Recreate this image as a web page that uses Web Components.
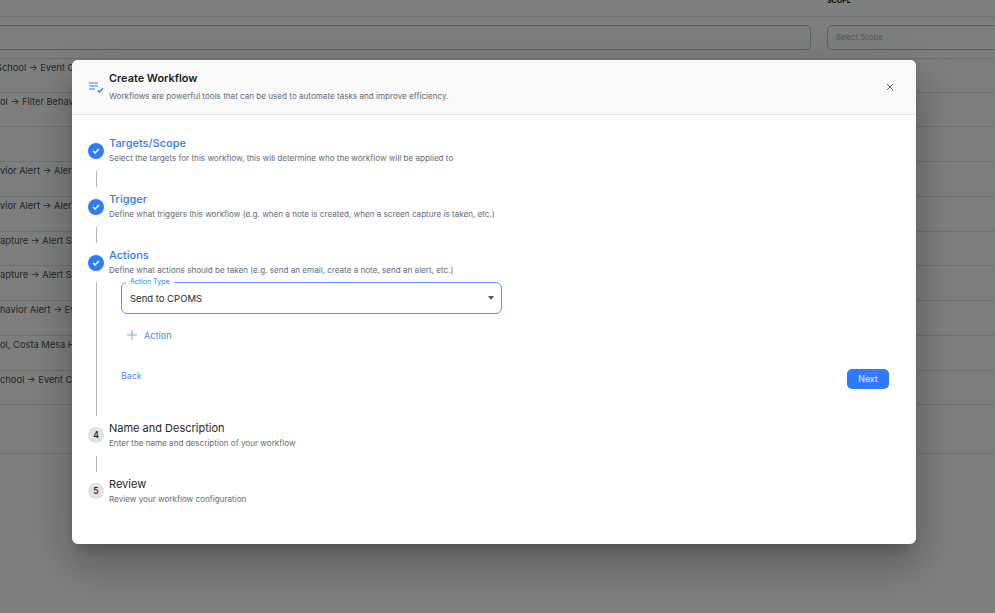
<!DOCTYPE html>
<html lang="en"><head><meta charset="utf-8"><title>Create Workflow</title>
<style>
html,body{margin:0;height:100%;overflow:hidden;background:#fff;font-family:Inter,"Noto Sans",sans-serif}
</style></head><body>
<bg-table></bg-table>
<workflow-modal>
  <wf-step state="done" title-text="Targets/Scope" desc="Select the targets for this workflow, this will determine who the workflow will be applied to"></wf-step>
  <wf-step state="done" title-text="Trigger" desc="Define what triggers this workflow (e.g. when a note is created, when a screen capture is taken, etc.)"></wf-step>
  <wf-step state="done" expanded title-text="Actions" desc="Define what actions should be taken (e.g. send an email, create a note, send an alert, etc.)">
    <action-form></action-form>
  </wf-step>
  <wf-step num="4" title-text="Name and Description" desc="Enter the name and description of your workflow"></wf-step>
  <wf-step num="5" last title-text="Review" desc="Review your workflow configuration"></wf-step>
</workflow-modal>
<script>
class BgTable extends HTMLElement{
  constructor(){super();const s=this.attachShadow({mode:'open'});
  const data=[
    [34,'School → Event Created',-4],
    [34,'ol → Filter Behavior',0],
    [35,'',0],
    [35,'vior Alert → Alert Sent',0],
    [35,'vior Alert → Alert Sent',0],
    [34,'apture → Alert Sent',0],
    [35,'apture → Alert Sent',0],
    [35,'havior Alert → Event',0],
    [35,'ol, Costa Mesa High',0],
    [34,'chool → Event Created',0],
    [49,'',0]];
  s.innerHTML=`<style>
  :host{display:block;height:613px;overflow:hidden;color:#505050;font:400 9.3px Inter,sans-serif;background:#fbfdfc}
  .head{height:16px;border-bottom:1px solid #dedede;display:flex;justify-content:flex-end}
  .head b{width:168px;font-size:7px;font-weight:700;color:#111;line-height:2px;overflow:hidden;height:5px}
  .filters{height:42px;border-bottom:1px solid #dedede;display:flex;gap:16px;box-sizing:border-box;padding-top:8px;margin-right:-40px}
  .f{height:25px;box-sizing:border-box;border:1px solid #bcc2c8;border-radius:5px}
  .f.a{flex:0 0 821px;margin-left:-10px}.f.b{flex:1;padding:0 8px;font:400 7.5px/23px Inter,sans-serif;color:#a9a9a9}
  .r{box-sizing:border-box;border-bottom:1px solid #dedede;white-space:nowrap;overflow:hidden}
  .r span{display:block;line-height:17px}
  </style>
  <div class="head"><b>SCOPE</b></div>
  <div class="filters"><div class="f a"></div><div class="f b">Select Scope</div></div>
  ${data.map(d=>`<div class="r" style="height:${d[0]}px"><span style="text-indent:${d[2]}px">${d[1]}</span></div>`).join('')}`;
  }
}
customElements.define('bg-table',BgTable);

class WorkflowModal extends HTMLElement{
  constructor(){super();const s=this.attachShadow({mode:'open'});
  s.innerHTML=`<style>
  :host{position:fixed;inset:0;background:rgba(0,0,0,.5);display:block}
  .m{position:absolute;left:72px;top:60px;width:844px;height:484px;background:#fff;border-radius:6px;overflow:hidden;display:flex;flex-direction:column}
  .shadow{position:absolute;left:72px;top:60px;width:844px;height:484px;border-radius:6px;box-shadow:0 11px 15px -7px rgba(0,0,0,.2),0 24px 38px 3px rgba(0,0,0,.14),0 9px 46px 8px rgba(0,0,0,.12)}
  header{height:55px;box-sizing:border-box;background:#f9f9f9;border-bottom:1px solid #e5e5e5;display:flex;align-items:center;padding:0 21px 0 17px}
  header svg.i{width:16px;height:12px;margin-right:4px;flex:none}
  .t{flex:1;display:flex;flex-direction:column;gap:7px;margin-top:-2px}
  h1{margin:0;font:600 10.9px/12px Inter,sans-serif;color:#1c1e21}
  p{margin:0;font:400 8.1px/10px Inter,sans-serif;color:#646c78}
  .x{width:10px;height:10px;display:flex;align-items:center;justify-content:center;border:0;background:none;padding:0}
  .body{padding:20px 27px 0 16px;flex:1}
  </style><div class="shadow"></div>
  <div class="m" role="dialog"><header>
    <svg class="i" viewBox="0 0 16 12" fill="none" stroke="#2f7bf6" stroke-width="1.1"><path d="M0 2h9M0 5h9M0 8h6"/><path stroke-width="1.3" d="M8.7 9.3l1.8 1.7 3.4-3.7"/></svg>
    <div class="t"><h1>Create Workflow</h1><p>Workflows are powerful tools that can be used to automate tasks and improve efficiency.</p></div>
    <button class="x" aria-label="Close"><svg width="8" height="8" viewBox="0 0 8 8" stroke="#5a6470" stroke-width="1"><path d="M1 1l6 6M7 1L1 7"/></svg></button>
  </header><div class="body"><slot></slot></div></div>`;
  }
}
customElements.define('workflow-modal',WorkflowModal);

class WfStep extends HTMLElement{
  constructor(){super();const s=this.attachShadow({mode:'open'});
  const done=this.getAttribute('state')==='done';const last=this.hasAttribute('last');const exp=this.hasAttribute('expanded');
  const badge=done?`<svg class="b" viewBox="0 0 16 16" width="16" height="16"><circle cx="8" cy="8" r="8" fill="#2f7bf6"/><path d="M5.1 8l2 1.9 3.8-3.9" fill="none" stroke="#fff" stroke-width="1.5"/></svg>`:`<span class="n b">${this.getAttribute('num')}</span>`;
  s.innerHTML=`<style>
  :host{display:block}
  .h{display:flex;align-items:flex-start;gap:5px;height:32px}
  .b{margin-top:${exp?'7.5px':'8px'};flex:none}
  .n{width:16px;height:16px;border-radius:50%;background:#e2e2e2;color:#26292c;font:600 8.5px/16px Inter,sans-serif;text-align:center}
  .tt{display:flex;flex-direction:column;gap:3px;padding-top:${done?1:2}px}
  .title{font:${done?500:400} 11px/14px Inter,sans-serif;color:${done?'#2f7bf6':'#26292c'}}
  .desc{font:400 8.1px/10px Inter,sans-serif;color:#646c78;white-space:nowrap}
  .c{margin:${exp?'3px 0 3px 8px':done?'4px 0 4px 8px':'5px 0 3px 8px'};border-left:1px solid #b4b4b4;min-height:16px}
  .c.none{display:none}
  </style>
  <div class="h">${badge}<div class="tt"><div class="title">${this.getAttribute('title-text')}</div><div class="desc">${this.getAttribute('desc')}</div></div></div>
  <div class="c ${last?'none':''}"><slot></slot></div>`;
  }
}
customElements.define('wf-step',WfStep);

class ActionForm extends HTMLElement{
  constructor(){super();const s=this.attachShadow({mode:'open'});
  s.innerHTML=`<style>
  :host{display:block;padding:0 0 0 24px;height:134px;box-sizing:border-box;font-family:Inter,sans-serif}
  .sel{width:381px;height:32px;box-sizing:border-box;border:1px solid #5b94f4;border-radius:6px;display:flex;align-items:center;justify-content:space-between;padding:0 7px 0 8px;position:relative;font:400 9.5px Inter,sans-serif;color:#26292c}
  .lb{position:absolute;top:-5px;left:4px;padding:0 4px;background:#fff;font:400 7px/8px Inter,sans-serif;color:#2f7bf6}
  .arrow{width:0;height:0;border:3.5px solid transparent;border-top:4px solid #555;border-bottom:0}
  .add{display:flex;align-items:center;gap:7px;margin:15px 0 0 6px;height:12px;font:400 9.2px Inter,sans-serif;color:#4b8af5}
  .nav{display:flex;justify-content:space-between;margin-top:24px;width:768px;align-items:flex-start}
  .back{font:400 8.8px/12px Inter,sans-serif;color:#4b8af5;margin-top:5px}
  .next{width:42px;height:20px;margin-top:4px;background:#2f7bff;border-radius:5px;color:#e8f0ff;font:400 8.8px/20px Inter,sans-serif;text-align:center}
  </style>
  <div class="sel"><span class="lb">Action Type</span><span>Send to CPOMS</span><span class="arrow"></span></div>
  <div class="add"><svg width="10" height="10" viewBox="0 0 10 10" stroke="#7aa8f5" stroke-width="1"><path d="M5 0v10M0 5h10"/></svg><span>Action</span></div>
  <div class="nav"><span class="back">Back</span><span class="next">Next</span></div>`;
  }
}
customElements.define('action-form',ActionForm);
</script></body></html>
